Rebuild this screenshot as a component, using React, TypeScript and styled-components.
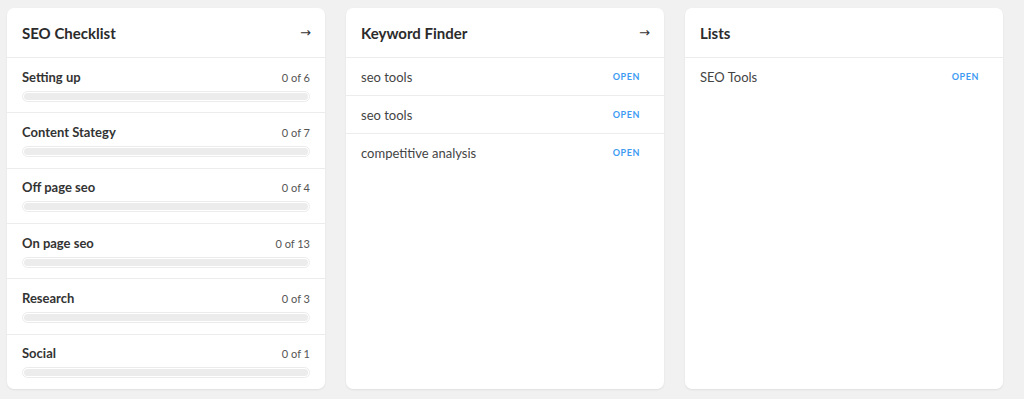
import styled, { createGlobalStyle } from 'styled-components';

const GlobalStyle = createGlobalStyle`
  html, body {
    margin: 0;
    padding: 0;
    background: #f1f1f1;
    font-family: Lato, 'Open Sans', sans-serif;
    color: #333;
  }
`;

const checklist = [
  { name: 'Setting up', done: 0, total: 6 },
  { name: 'Content Stategy', done: 0, total: 7 },
  { name: 'Off page seo', done: 0, total: 4 },
  { name: 'On page seo', done: 0, total: 13 },
  { name: 'Research', done: 0, total: 3 },
  { name: 'Social', done: 0, total: 1 },
];

const keywords = ['seo tools', 'seo tools', 'competitive analysis'];
const lists = ['SEO Tools'];

const Page = styled.div`
  display: grid;
  grid-template-columns: repeat(3, 318px);
  gap: 21px;
  padding: 8px 7px 10px;
`;

const Card = styled.section`
  background: #fff;
  border-radius: 7px;
  height: 381px;
  box-shadow: 0 1px 2px rgba(0, 0, 0, 0.08);
  overflow: hidden;
  display: flex;
  flex-direction: column;
`;

const CardHeader = styled.header`
  height: 49px;
  flex: none;
  display: flex;
  align-items: center;
  justify-content: space-between;
  padding: 0 15px;
  border-bottom: 1px solid #ececec;
`;

const Title = styled.h2`
  margin: 0;
  font-size: 15px;
  font-weight: 700;
  color: #2b2b2b;
`;

const Arrow = styled.span`
  font-family: 'DejaVu Sans', sans-serif;
  font-size: 13px;
  color: #333;
  margin-right: -1px;
`;

const CheckRow = styled.div`
  flex: 1;
  display: flex;
  flex-direction: column;
  justify-content: center;
  gap: 6px;
  padding: 0 15px;
  border-bottom: 1px solid #ececec;
  &:last-child {
    border-bottom: none;
  }
`;

const RowTop = styled.div`
  display: flex;
  justify-content: space-between;
  align-items: baseline;
`;

const StepName = styled.span`
  font-size: 13px;
  font-weight: 700;
  color: #333;
`;

const Count = styled.span`
  font-size: 11px;
  color: #555;
`;

const Track = styled.div`
  height: 7px;
  border: 1px solid #ebebeb;
  border-radius: 6px;
  padding: 1px;
  background: #fff;
`;

const Fill = styled.div`
  height: 100%;
  border-radius: 4px;
  background: #ececec;
`;

const ItemRow = styled.div`
  height: 37px;
  display: flex;
  align-items: center;
  justify-content: space-between;
  padding: 0 24px 0 15px;
  border-bottom: 1px solid #ececec;
  &:last-child {
    border-bottom: none;
  }
`;

const ItemText = styled.span`
  font-size: 13px;
  color: #444;
`;

const OpenLink = styled.a`
  font-size: 9px;
  font-weight: 700;
  letter-spacing: 0.6px;
  color: #3d9bf2;
  text-decoration: none;
  cursor: pointer;
`;

export default function App() {
  return (
    <>
      <GlobalStyle />
      <Page>
        <Card>
          <CardHeader>
            <Title>SEO Checklist</Title>
            <Arrow>→</Arrow>
          </CardHeader>
          {checklist.map((step) => (
            <CheckRow key={step.name}>
              <RowTop>
                <StepName>{step.name}</StepName>
                <Count>
                  {step.done} of {step.total}
                </Count>
              </RowTop>
              <Track>
                <Fill />
              </Track>
            </CheckRow>
          ))}
        </Card>
        <Card>
          <CardHeader>
            <Title>Keyword Finder</Title>
            <Arrow>→</Arrow>
          </CardHeader>
          {keywords.map((k, i) => (
            <ItemRow key={i}>
              <ItemText>{k}</ItemText>
              <OpenLink>OPEN</OpenLink>
            </ItemRow>
          ))}
        </Card>
        <Card>
          <CardHeader>
            <Title>Lists</Title>
          </CardHeader>
          {lists.map((l) => (
            <ItemRow key={l}>
              <ItemText>{l}</ItemText>
              <OpenLink>OPEN</OpenLink>
            </ItemRow>
          ))}
        </Card>
      </Page>
    </>
  );
}
